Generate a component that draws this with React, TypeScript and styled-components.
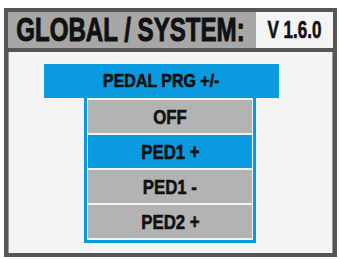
import React from "react";
import styled, { createGlobalStyle } from "styled-components";

const GlobalStyle = createGlobalStyle`
  body {
    margin: 0;
    background: #ffffff;
    font-family: "Liberation Sans", Arial, sans-serif;
  }
`;

// the device font is a heavy condensed sans, squeeze Liberation Sans to match
const Narrow = styled.span<{ $scale?: number; $stroke?: number }>`
  display: inline-block;
  white-space: nowrap;
  transform: scaleX(${(p) => p.$scale ?? 0.8});
  -webkit-text-stroke: ${(p) => p.$stroke ?? 0.6}px #111;
`;

const Screen = styled.div`
  margin: 8px 0 0 4px;
  width: 333px;
  height: 249px;
  box-sizing: border-box;
  border: 4px solid #565656;
  background: #f4f4f4;
  display: flex;
  flex-direction: column;
`;

const Header = styled.div`
  height: 36px;
  display: flex;
  align-items: stretch;
  background: #a7a7a7;
  border-bottom: 4px solid #565656;
`;

const Title = styled.div`
  flex: 1;
  display: flex;
  align-items: center;
  justify-content: center;
  padding-right: 4px;
  font-size: 33px;
  font-weight: 700;
  color: #111;
  overflow: hidden;
`;

const Version = styled.div`
  width: 77px;
  display: flex;
  align-items: center;
  justify-content: center;
  background: #f4f4f4;
  font-size: 23px;
  font-weight: 700;
  color: #111;
`;

const Body = styled.div`
  flex: 1;
  padding: 12px 0 0 36px;
  box-shadow: inset 1px 0 0 #9a9a9a, inset -1px 0 0 #9a9a9a;
`;

const MenuTitle = styled.div`
  width: 235px;
  height: 34px;
  display: flex;
  align-items: center;
  justify-content: center;
  background: #0a9ae0;
  font-size: 19px;
  font-weight: 700;
  color: #111;
`;

const List = styled.div`
  margin-left: 40px;
  width: 172px;
  box-sizing: border-box;
  border: 3px solid #0a9ae0;
  border-top: none;
  background: #eef6fb;
  padding: 2px 1px 2px;
  display: flex;
  flex-direction: column;
  gap: 2px;
`;

const Item = styled.div<{ $selected?: boolean }>`
  height: 33px;
  display: flex;
  align-items: center;
  justify-content: center;
  background: ${(p) => (p.$selected ? "#0a9ae0" : "#b3b3b3")};
  font-size: 21px;
  font-weight: 700;
  color: #111;
`;

const items = ["OFF", "PED1 +", "PED1 -", "PED2 +"];

export default function App() {
  return (
    <>
      <GlobalStyle />
      <Screen>
        <Header>
          <Title>
            <Narrow $scale={0.73} $stroke={1}>GLOBAL / SYSTEM:</Narrow>
          </Title>
          <Version>
            <Narrow $scale={0.74} $stroke={0.6}>V 1.6.0</Narrow>
          </Version>
        </Header>
        <Body>
          <MenuTitle>
            <Narrow $scale={0.84}>PEDAL PRG +/-</Narrow>
          </MenuTitle>
          <List>
            {items.map((it, i) => (
              <Item key={it} $selected={i === 1}>
                <Narrow $scale={0.8}>{it}</Narrow>
              </Item>
            ))}
          </List>
        </Body>
      </Screen>
    </>
  );
}
